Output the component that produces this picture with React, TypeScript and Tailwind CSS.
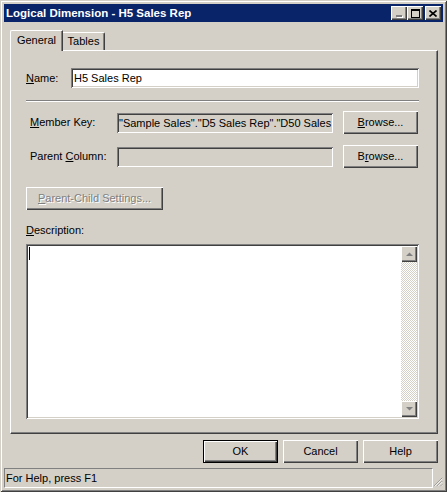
import React from 'react'

// classic 3D edges
const raised = 'shadow-[inset_1px_1px_#ffffff,inset_-1px_-1px_#404040,inset_-2px_-2px_#808080]'
const sunken = 'shadow-[inset_1px_1px_#808080,inset_-1px_-1px_#ffffff,inset_2px_2px_#404040,inset_-2px_-2px_#d4d0c8]'

function Button({ children, className = '', isDefault = false }: { children: React.ReactNode; className?: string; isDefault?: boolean }) {
  return (
    <div
      className={`flex items-center justify-center h-[23px] w-[75px] bg-[#d4d0c8] ${
        isDefault
          ? 'border border-black shadow-[inset_1px_1px_#ffffff,inset_-1px_-1px_#404040,inset_-2px_-2px_#808080]'
          : raised
      } ${className}`}
    >
      {children}
    </div>
  )
}

function TitleButton({ children }: { children: React.ReactNode }) {
  return (
    <div className={`w-[16px] h-[14px] bg-[#d4d0c8] flex items-center justify-center ${raised}`}>{children}</div>
  )
}

function ArrowButton({ up }: { up?: boolean }) {
  return (
    <div className={`w-[16px] h-[16px] bg-[#d4d0c8] flex items-center justify-center ${raised}`}>
      <svg width="9" height="6" viewBox="0 0 9 6" className={up ? '' : 'rotate-180'}>
        <path d="M1 5 L8 5 L4.5 1.5 Z" fill="#808080" />
      </svg>
    </div>
  )
}

export default function App() {
  return (
    <div className="w-[447px] h-[492px] bg-[#d4d0c8] p-[4px] flex flex-col text-[11px] leading-[13px] text-black font-['Liberation_Sans',Arial,sans-serif] shadow-[inset_1px_1px_#d4d0c8,inset_-1px_-1px_#404040,inset_2px_2px_#ffffff,inset_-2px_-2px_#808080] overflow-hidden">
      {/* Title bar */}
      <div className="h-[18px] bg-[#0a246a] flex items-center pl-[2px] pr-[2px] shrink-0">
        <span className="text-white font-bold text-[11.5px]">Logical Dimension - H5 Sales Rep</span>
        <div className="ml-auto flex items-center">
          <TitleButton>
            <div className="w-[6px] h-[2px] bg-[#808080] mt-[6px] shadow-[1px_1px_#ffffff]" />
          </TitleButton>
          <TitleButton>
            <div className="w-[9px] h-[9px] border border-black border-t-2" />
          </TitleButton>
          <div className="w-[2px]" />
          <TitleButton>
            <svg width="8" height="7" viewBox="0 0 8 7">
              <path d="M0.5 0.5 L7.5 6.5 M7.5 0.5 L0.5 6.5" stroke="black" strokeWidth="1.6" />
            </svg>
          </TitleButton>
        </div>
      </div>

      {/* Body */}
      <div className="flex flex-col pl-[6px] pr-[5px] pt-[8px] shrink-0">
        {/* Tabs */}
        <div className="h-[20px] flex items-end relative z-10">
          <div className="h-[21px] -mb-[1px] w-[53px] bg-[#d4d0c8] border-t border-l border-white rounded-tl-[2px] shadow-[inset_-1px_0_#808080] border-r border-r-[#404040] flex items-start justify-center pt-[3px]">
            General
          </div>
          <div className="h-[18px] w-[42px] bg-[#d4d0c8] border-t border-white rounded-tr-[2px] border-r border-r-[#404040] shadow-[inset_-1px_0_#808080] flex items-start justify-center pt-[2px]">
            Tables
          </div>
        </div>

        {/* Panel */}
        <div className="h-[384px] border-t border-l border-white border-r border-b border-r-[#404040] border-b-[#404040] shadow-[inset_-1px_-1px_#808080] pl-[15px] pr-[18px] pt-[17px] flex flex-col">
          <div className="flex items-center h-[20px]">
            <span className="w-[45px]">
              <u>N</u>ame:
            </span>
            <div className={`flex-1 h-[20px] bg-white flex items-center pl-[3px] ${sunken}`}>H5 Sales Rep</div>
          </div>

          <div className="mt-[12px] h-[2px] border-t border-t-[#808080] border-b border-b-white" />

          <div className="mt-[9px] flex items-center h-[23px]">
            <span className="w-[91px] pl-[4px]">
              <u>M</u>ember Key:
            </span>
            <div className={`w-[216px] h-[20px] mt-[1px] flex items-center pl-[2px] overflow-hidden whitespace-nowrap ${sunken}`}>
              "Sample Sales"."D5 Sales Rep"."D50 Sales
            </div>
            <Button className="ml-[10px]">
              <span>
                <u>B</u>rowse...
              </span>
            </Button>
          </div>

          <div className="mt-[11px] flex items-center h-[23px]">
            <span className="w-[91px] pl-[4px]">
              Parent <u>C</u>olumn:
            </span>
            <div className={`w-[216px] h-[20px] mt-[1px] ${sunken}`} />
            <Button className="ml-[10px]">
              <span>
                B<u>r</u>owse...
              </span>
            </Button>
          </div>

          <Button className="mt-[19px] w-[137px]">
            <span className="text-[#808080] [text-shadow:1px_1px_0_#ffffff]">
              <u>P</u>arent-Child Settings...
            </span>
          </Button>

          <div className="mt-[14px] h-[13px]">
            <u>D</u>escription:
          </div>

          <div className={`mt-[7px] h-[175px] bg-white p-[2px] flex ${sunken}`}>
            <div className="flex-1 pl-[1px] pt-[1px]">
              <div className="w-[1px] h-[13px] bg-black" />
            </div>
            <div className="w-[16px] flex flex-col">
              <ArrowButton up />
              <div className="flex-1 bg-[repeating-conic-gradient(#d4d0c8_0_25%,#ffffff_0_50%)] bg-size-[2px_2px]" />
              <ArrowButton />
            </div>
          </div>
        </div>

        {/* Dialog buttons */}
        <div className="mt-[6px] flex justify-end gap-[5px]">
          <Button isDefault>OK</Button>
          <Button>Cancel</Button>
          <Button>Help</Button>
        </div>
      </div>

      {/* Status bar */}
      <div className="mt-[5px] h-[20px] flex shrink-0">
        <div className="flex-1 border-t border-l border-[#808080] border-b border-r border-b-white border-r-white flex items-center pl-[1px]">
          For Help, press F1
        </div>
        <div className="w-[10px] flex items-end justify-end">
          <svg width="12" height="12" viewBox="0 0 12 12">
            <path d="M11 1 L1 11 M11 5 L5 11 M11 9 L9 11" stroke="#808080" strokeWidth="1" />
            <path d="M11 2 L2 11 M11 6 L6 11 M11 10 L10 11" stroke="#ffffff" strokeWidth="1" />
          </svg>
        </div>
      </div>
    </div>
  )
}
